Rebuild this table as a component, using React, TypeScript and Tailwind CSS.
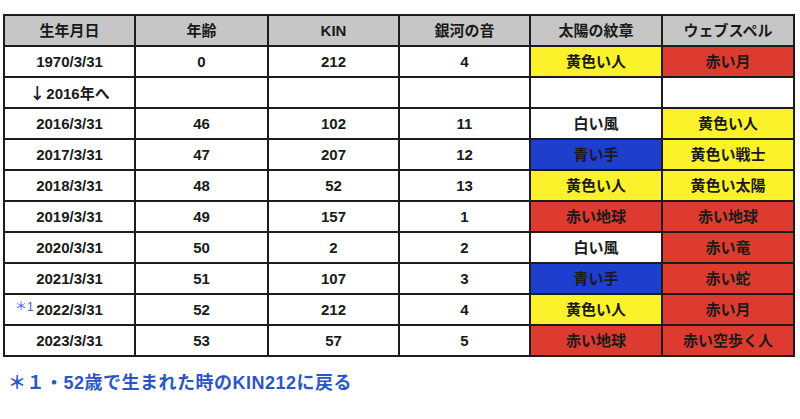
import React from "react";

type C = { t: string; bg?: "y" | "r" | "b" | "w" };

const Y = "bg-[#fbf22c]";
const R = "bg-[#de3b30]";
const B = "bg-[#1e3fce]";

const bgClass = (bg?: string) =>
  bg === "y" ? Y : bg === "r" ? R : bg === "b" ? B : "bg-white";

const rows: { d: string; age: string; kin: string; tone: string; sun: C; wave: C; note?: boolean; arrow?: boolean }[] = [
  { d: "1970/3/31", age: "0", kin: "212", tone: "4", sun: { t: "黄色い人", bg: "y" }, wave: { t: "赤い月", bg: "r" } },
  { d: "2016年へ", age: "", kin: "", tone: "", sun: { t: "" }, wave: { t: "" }, arrow: true },
  { d: "2016/3/31", age: "46", kin: "102", tone: "11", sun: { t: "白い風" }, wave: { t: "黄色い人", bg: "y" } },
  { d: "2017/3/31", age: "47", kin: "207", tone: "12", sun: { t: "青い手", bg: "b" }, wave: { t: "黄色い戦士", bg: "y" } },
  { d: "2018/3/31", age: "48", kin: "52", tone: "13", sun: { t: "黄色い人", bg: "y" }, wave: { t: "黄色い太陽", bg: "y" } },
  { d: "2019/3/31", age: "49", kin: "157", tone: "1", sun: { t: "赤い地球", bg: "r" }, wave: { t: "赤い地球", bg: "r" } },
  { d: "2020/3/31", age: "50", kin: "2", tone: "2", sun: { t: "白い風" }, wave: { t: "赤い竜", bg: "r" } },
  { d: "2021/3/31", age: "51", kin: "107", tone: "3", sun: { t: "青い手", bg: "b" }, wave: { t: "赤い蛇", bg: "r" } },
  { d: "2022/3/31", age: "52", kin: "212", tone: "4", sun: { t: "黄色い人", bg: "y" }, wave: { t: "赤い月", bg: "r" }, note: true },
  { d: "2023/3/31", age: "53", kin: "57", tone: "5", sun: { t: "赤い地球", bg: "r" }, wave: { t: "赤い空歩く人", bg: "r" } },
];

const headers = ["生年月日", "年齢", "KIN", "銀河の音", "太陽の紋章", "ウェブスペル"];

const cell = "border-2 border-[#1c1c1c] h-[31px] p-0 text-center align-middle";

export default function App() {
  return (
    <div
      className="w-[800px] h-[419px] bg-white text-[#1a1a1a] pt-[14px] pl-[3px]"
      style={{ fontFamily: '"Liberation Sans", "Noto Sans CJK JP", sans-serif' }}
    >
      <table className="border-collapse table-fixed w-[790px] text-[15px] font-bold leading-none">
        <colgroup>
          <col className="w-[131px]" />
          <col className="w-[133px]" />
          <col className="w-[131px]" />
          <col className="w-[131px]" />
          <col className="w-[132px]" />
          <col className="w-[132px]" />
        </colgroup>
        <thead>
          <tr>
            {headers.map((h) => (
              <th key={h} className={`${cell} bg-[#c6c6c6] font-bold`}>
                {h}
              </th>
            ))}
          </tr>
        </thead>
        <tbody>
          {rows.map((r, i) => (
            <tr key={i}>
              <td className={`${cell} relative`}>
                {r.note && (
                  <span className="absolute left-[10px] top-[6px] text-[12px] font-normal text-[#3b63d6]">
                    ＊<span className="text-[12px]">1</span>
                  </span>
                )}
                {r.arrow && (
                  <span className="font-['Noto_Sans_CJK_JP'] text-[16px] font-bold mr-[1px]">↓</span>
                )}
                {r.d}
              </td>
              <td className={cell}>{r.age}</td>
              <td className={cell}>{r.kin}</td>
              <td className={cell}>{r.tone}</td>
              <td className={`${cell} ${bgClass(r.sun.bg)}`}>{r.sun.t}</td>
              <td className={`${cell} ${bgClass(r.wave.bg)}`}>{r.wave.t}</td>
            </tr>
          ))}
        </tbody>
      </table>
      <div className="mt-[13px] pl-[5px] text-[18px] font-bold text-[#2a56c8] tracking-[0.5px]">
        ＊１・52歳で生まれた時のKIN212に戻る
      </div>
    </div>
  );
}
